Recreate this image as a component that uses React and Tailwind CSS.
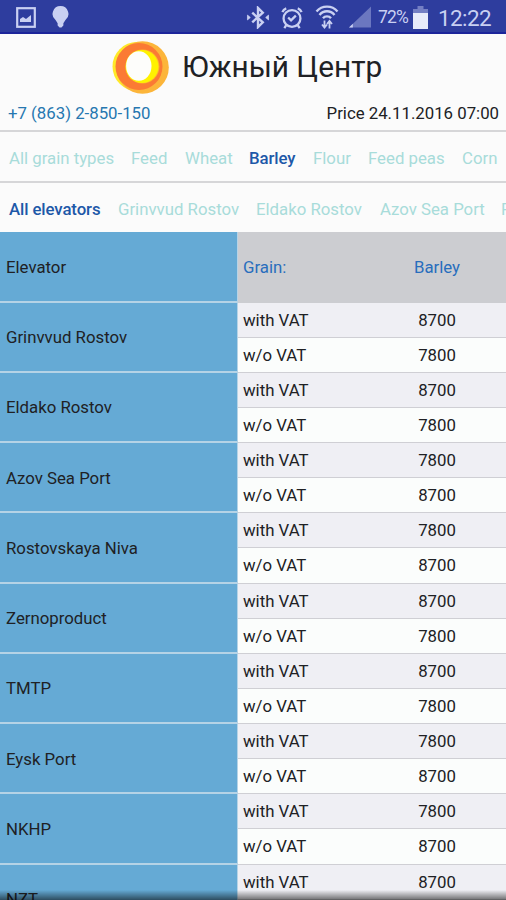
import React from "react";

const grains = [
  { name: "All grain types", width: "w-[122px]" },
  { name: "Feed", width: "w-[54px]" },
  { name: "Wheat", width: "w-[64px]" },
  { name: "Barley", width: "w-[64px]", active: true },
  { name: "Flour", width: "w-[55px]" },
  { name: "Feed peas", width: "w-[94px]" },
  { name: "Corn", width: "w-[60px]" },
];

const elevators = [
  { name: "All elevators", width: "w-[109px]", active: true },
  { name: "Grinvvud Rostov", width: "w-[138px]" },
  { name: "Eldako Rostov", width: "w-[124px]" },
  { name: "Azov Sea Port", width: "w-[121px]" },
  { name: "Rostovskaya Niva", width: "w-[140px]" },
];

const rows = [
  { name: "Grinvvud Rostov", vat: 8700, noVat: 7800 },
  { name: "Eldako Rostov", vat: 8700, noVat: 7800 },
  { name: "Azov Sea Port", vat: 7800, noVat: 8700 },
  { name: "Rostovskaya Niva", vat: 7800, noVat: 8700 },
  { name: "Zernoproduct", vat: 8700, noVat: 7800 },
  { name: "TMTP", vat: 8700, noVat: 7800 },
  { name: "Eysk Port", vat: 7800, noVat: 8700 },
  { name: "NKHP", vat: 7800, noVat: 8700 },
  { name: "NZT", vat: 8700, noVat: 7800 },
];

const StatusBar = () => (
  <div className="flex h-[34px] items-center border-b-2 border-[#1c259a] bg-[#2e3d9e] pt-[2px] text-[#c9d0f2]">
    <svg className="ml-4 h-[21px] w-5" viewBox="0 0 20 21" fill="none">
      <rect x="1.2" y="1.2" width="17.6" height="18.6" stroke="currentColor" strokeWidth="2.2" />
      <path d="M4 15v-3l3-2 3 2 5-4v7z" fill="currentColor" />
    </svg>
    <svg className="ml-4 h-[22px] w-[17px]" viewBox="0 0 17 23" fill="currentColor">
      <path d="M8.500 0a8.300 8.300 0 0 0-5 14.900l2 3.100v2.500l2 2h2l2-2V18l2-3.100A8.300 8.300 0 0 0 8.500 0z" />
    </svg>
    <svg className="ml-auto h-[23px] w-6" viewBox="0 0 24 24" fill="none" stroke="currentColor" strokeWidth="2.5">
      <path d="M6 7l11 10-5 5V2l5 5L6 17" />
      <path d="M1 9.500L4 12l-3 2.500zM23 9.500L20 12l3 2.500z" fill="currentColor" strokeWidth="0.8" />
    </svg>
    <svg className="ml-[10px] h-[23px] w-6" viewBox="0 0 24 24" fill="none" stroke="currentColor" strokeWidth="2.4">
      <circle cx="12" cy="13" r="8.8" />
      <path d="M8 12l3 3 5-5M2 6.500q1-3 4-4M22 6.500q-1-3-4-4M6 20l-2 3M18 20l2 3" />
    </svg>
    <svg className="ml-[11px] h-6 w-6" viewBox="0 0 24 24" fill="none" stroke="currentColor" strokeWidth="2.4">
      <path d="M1.500 6.500C7 0 17 0 22.500 6.500M4.500 10c4-5 11-5 15 0M8 13.200c2-2.500 6-2.500 8 0" />
      <path d="M9.500 15.500v7M7 19.500l2.500 3 2.500-3M14.500 23.500v-7M12 19l2.500-3 2.500 3" strokeWidth="1.8" />
    </svg>
    <svg className="ml-[10px] h-[22px] w-[22px]" viewBox="0 0 23 22" fill="currentColor">
      <path d="M23 0v22H0z" opacity="0.4" />
      <path d="M4 18v4H0z" />
    </svg>
    <span className="ml-[7px] w-[33px] whitespace-nowrap text-[17.5px] tracking-[-0.8px]">72%</span>
    <svg className="ml-[2px] h-[23px] w-[15px]" viewBox="0 0 15 23" fill="currentColor">
      <path d="M4.500 0h6v3H15v5H0V3h4.500z" opacity="0.45" />
      <path d="M0 7h15v16H0z" className="text-[#e8ebfa]" />
    </svg>
    <span className="ml-[10px] mr-[15px] w-[53px] whitespace-nowrap pt-px text-[22.5px] tracking-[-0.6px]">12:22</span>
  </div>
);

const Logo = () => (
  <svg className="h-[54px] w-[57px]" viewBox="0 0 57 54">
    <circle cx="25" cy="26.5" r="24.5" fill="#ffe928" />
    <circle cx="30.5" cy="27.5" r="26.3" fill="#fcb53a" />
    <circle cx="27" cy="26.5" r="23.5" fill="#fb7a34" />
    <circle cx="30.5" cy="26.5" r="17" fill="#fcb032" />
    <circle cx="30" cy="26.5" r="16.5" fill="#fff200" />
    <ellipse cx="26.8" cy="26" rx="12.7" ry="14.8" fill="#fdfdfb" />
  </svg>
);

const TabRow = ({ items }) => (
  <div className="flex h-[51px] items-center overflow-hidden border-t-2 border-[#d6d6d8] pl-[9px] pt-[3px]">
    {items.map((item) => (
      <span
        key={item.name}
        className={`shrink-0 whitespace-nowrap ${item.width} ${item.active ? "font-medium tracking-[-0.1px] text-[#1d58a8]" : "text-[#a8dcda]"}`}
      >
        {item.name}
      </span>
    ))}
  </div>
);

const PriceLine = ({ label, price, shade }) => (
  <div className={`flex h-1/2 items-center border-b border-[#cfcfd4] pl-[5px] ${shade}`}>
    <span className="w-[126px]">{label}</span>
    <span className="w-[136px] text-center">{price}</span>
  </div>
);

const App = () => {
  return (
    <div className="relative h-[900px] w-full overflow-hidden bg-[#fbfbfb] font-[Roboto,sans-serif] text-[16.8px] leading-5 text-[#202124]">
      <StatusBar />

      <div className="flex h-[65px] items-center pl-[112px]">
        <Logo />
        <h1 className="ml-[13px] whitespace-nowrap pt-px text-[29.8px]">Южный Центр</h1>
      </div>
      <div className="flex h-[31px] items-center justify-between pb-[3px] pl-2 pr-[7px]">
        <span className="text-[#2677b0]">+7 (863) 2-850-150</span>
        <span>Price 24.11.2016 07:00</span>
      </div>

      <TabRow items={grains} />
      <TabRow items={elevators} />

      <div className="flex h-[70.5px]">
        <div className="flex w-[238px] items-center border-b-2 border-r border-[#b5d3e6] bg-[#65aad5] pl-[6px] pt-[2px]">
          Elevator
        </div>
        <div className="flex flex-1 items-center bg-[#cccdd1] pl-[5px] text-[#286dbd]">
          <span className="w-[126px]">Grain:</span>
          <span className="w-[136px] text-center">Barley</span>
        </div>
      </div>

      {rows.map((row) => (
        <div key={row.name} className="flex h-[70.25px]">
          <div className="flex w-[238px] items-center border-b-2 border-r border-[#b5d3e6] bg-[#65aad5] pl-[6px] pt-px">
            {row.name}
          </div>
          <div className="flex-1">
            <PriceLine label="with VAT" price={row.vat} shade="bg-[#efeff4]" />
            <PriceLine label="w/o VAT" price={row.noVat} shade="bg-[#fbfdfc]" />
          </div>
        </div>
      ))}

      <div className="absolute inset-x-0 bottom-0 h-[10px] bg-gradient-to-b from-transparent to-black/55" />
    </div>
  );
};

export default App;
